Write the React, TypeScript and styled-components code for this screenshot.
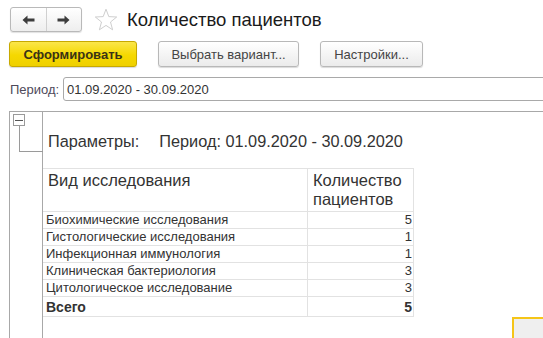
import React from "react";
import styled, { createGlobalStyle } from "styled-components";

const GlobalStyle = createGlobalStyle`
  html, body {
    margin: 0;
    padding: 0;
    background: #ffffff;
    overflow: hidden;
  }
  body {
    font-family: "Liberation Sans", Arial, sans-serif;
    color: #333333;
  }
`;

const Page = styled.div`
  width: 543px;
  height: 338px;
  overflow: hidden;
  display: flex;
  flex-direction: column;
`;

const Header = styled.div`
  display: flex;
  align-items: center;
  padding: 7px 0 0 10px;
  height: 25px;
`;

const NavGroup = styled.div`
  display: flex;
  width: 72px;
  height: 25px;
  box-sizing: border-box;
  border: 1px solid #b9b9b9;
  border-radius: 3px;
  background: linear-gradient(#ffffff, #eeeeee);
  box-shadow: 0 1px 1px rgba(0, 0, 0, 0.12);
`;

const NavButton = styled.div<{ $first?: boolean }>`
  flex: 1;
  display: flex;
  align-items: center;
  justify-content: center;
  border-right: ${(p) => (p.$first ? "1px solid #d0d0d0" : "none")};
`;

const StarWrap = styled.div`
  margin-left: 12px;
  width: 24px;
  height: 24px;
  display: flex;
`;

const Title = styled.div`
  margin-left: 9px;
  font-size: 18.5px;
  color: #1a1a1a;
  line-height: 22px;
`;

const ButtonRow = styled.div`
  display: flex;
  gap: 21px;
  padding: 9px 0 0 9px;
`;

const Button = styled.div<{ $primary?: boolean; $width: number }>`
  box-sizing: border-box;
  width: ${(p) => p.$width}px;
  height: 26px;
  display: flex;
  align-items: center;
  justify-content: center;
  font-size: 13px;
  border-radius: 3px;
  border: 1px solid ${(p) => (p.$primary ? "#c7a900" : "#b8b8b8")};
  background: ${(p) =>
    p.$primary
      ? "linear-gradient(#fbe64a, #f5d800 55%, #efd000)"
      : "linear-gradient(#ffffff, #ebebeb)"};
  color: ${(p) => (p.$primary ? "#3a3316" : "#444444")};
  font-weight: ${(p) => (p.$primary ? "bold" : "normal")};
  box-shadow: 0 1px 1px rgba(0, 0, 0, 0.15);
`;

const PeriodRow = styled.div`
  display: flex;
  align-items: center;
  padding: 10px 0 0 10px;
`;

const PeriodLabel = styled.div`
  font-size: 13px;
  color: #4e4a5a;
  width: 53px;
`;

const PeriodInput = styled.div`
  flex: 1;
  box-sizing: border-box;
  height: 24px;
  margin-right: -4px;
  border: 1px solid #a9a9a9;
  border-radius: 3px;
  font-size: 13px;
  color: #333333;
  display: flex;
  align-items: center;
  padding-left: 3px;
`;

const ReportFrame = styled.div`
  margin: 10px -4px 0 9px;
  flex: 1;
  display: flex;
  border: 1px solid #a8a8a8;
  border-bottom: none;
`;

const Gutter = styled.div`
  width: 32px;
  border-right: 1px solid #a8a8a8;
  position: relative;
`;

const CollapseBox = styled.div`
  position: absolute;
  left: 3px;
  top: 2px;
  width: 12px;
  height: 12px;
  box-sizing: border-box;
  border: 1px solid #9a9a9a;
  background: #ffffff;
  display: flex;
  align-items: center;
  justify-content: center;
  &::after {
    content: "";
    width: 8px;
    height: 1px;
    background: #555555;
  }
`;

const TreeLine = styled.div`
  position: absolute;
  left: 9px;
  top: 14px;
  width: 23px;
  height: 25px;
  border-left: 1px solid #9a9a9a;
  border-bottom: 1px solid #9a9a9a;
`;

const ReportBody = styled.div`
  flex: 1;
  display: flex;
  flex-direction: column;
  align-items: flex-start;
`;

const ParamsLine = styled.div`
  height: 56px;
  box-sizing: border-box;
  padding: 20px 0 0 5px;
  font-size: 16.3px;
  color: #333333;
  display: flex;
  gap: 20px;
  white-space: nowrap;
`;

const Table = styled.table`
  border-collapse: collapse;
  table-layout: fixed;
  font-family: "Liberation Sans", Arial, sans-serif;
  margin-left: -1px;
`;

const HeadCell = styled.th<{ $width: number }>`
  width: ${(p) => p.$width}px;
  height: 43px;
  box-sizing: border-box;
  border: 1px solid #e2e2e2;
  font-size: 16.5px;
  font-weight: normal;
  line-height: 19px;
  text-align: left;
  vertical-align: top;
  padding: 2px 4px 2px 5px;
  color: #333333;
`;

const Cell = styled.td<{ $num?: boolean; $total?: boolean }>`
  height: ${(p) => (p.$total ? 20 : 17)}px;
  box-sizing: border-box;
  border: 1px solid #e2e2e2;
  font-size: ${(p) => (p.$total ? 14 : 13)}px;
  font-weight: ${(p) => (p.$total ? "bold" : "normal")};
  line-height: 14px;
  padding: 0 1px 0 3px;
  text-align: ${(p) => (p.$num ? "right" : "left")};
  color: #333333;
  white-space: nowrap;
`;

const BottomRow = styled.div`
  flex: 1;
  align-self: stretch;
  display: flex;
  justify-content: flex-end;
  align-items: flex-end;
  padding-bottom: 2px;
`;

const FocusBox = styled.div`
  width: 34px;
  height: 23px;
  box-sizing: border-box;
  border: 2px solid #f5c518;
  background: #efefef;
`;

const rows = [
  { name: "Биохимические исследования", count: 5 },
  { name: "Гистологические исследования", count: 1 },
  { name: "Инфекционная иммунология", count: 1 },
  { name: "Клиническая бактериология", count: 3 },
  { name: "Цитологическое исследование", count: 3 },
];

const Arrow = ({ dir }: { dir: "left" | "right" }) => (
  <svg width="13" height="10" viewBox="0 0 13 10">
    <g transform={dir === "right" ? "translate(13,0) scale(-1,1)" : undefined}>
      <path d="M0.5 5 L5.5 0.5 L5.5 3.5 L12.5 3.5 L12.5 6.5 L5.5 6.5 L5.5 9.5 Z" fill="#3d3d3d" />
    </g>
  </svg>
);

const Star = () => (
  <svg width="24" height="24" viewBox="0 0 24 24">
    <path
      d="M12 1.2 L14.8 8.6 L22.7 9 L16.5 14 L18.6 21.8 L12 17.4 L5.4 21.8 L7.5 14 L1.3 9 L9.2 8.6 Z"
      fill="#ffffff"
      stroke="#c8c8c8"
      strokeWidth="0.9"
      strokeLinejoin="round"
    />
  </svg>
);

const App = () => {
  return (
    <Page>
      <GlobalStyle />
      <Header>
        <NavGroup>
          <NavButton $first>
            <Arrow dir="left" />
          </NavButton>
          <NavButton>
            <Arrow dir="right" />
          </NavButton>
        </NavGroup>
        <StarWrap>
          <Star />
        </StarWrap>
        <Title>Количество пациентов</Title>
      </Header>

      <ButtonRow>
        <Button $primary $width={128}>
          Сформировать
        </Button>
        <Button $width={141}>Выбрать вариант...</Button>
        <Button $width={103}>Настройки...</Button>
      </ButtonRow>

      <PeriodRow>
        <PeriodLabel>Период:</PeriodLabel>
        <PeriodInput>01.09.2020 - 30.09.2020</PeriodInput>
      </PeriodRow>

      <ReportFrame>
        <Gutter>
          <TreeLine />
          <CollapseBox />
        </Gutter>
        <ReportBody>
          <ParamsLine>
            <span>Параметры:</span>
            <span>Период: 01.09.2020 - 30.09.2020</span>
          </ParamsLine>
          <Table>
            <thead>
              <tr>
                <HeadCell $width={265}>Вид исследования</HeadCell>
                <HeadCell $width={106}>Количество пациентов</HeadCell>
              </tr>
            </thead>
            <tbody>
              {rows.map((r) => (
                <tr key={r.name}>
                  <Cell>{r.name}</Cell>
                  <Cell $num>{r.count}</Cell>
                </tr>
              ))}
              <tr>
                <Cell $total>Всего</Cell>
                <Cell $total $num>
                  5
                </Cell>
              </tr>
            </tbody>
          </Table>
          <BottomRow>
            <FocusBox />
          </BottomRow>
        </ReportBody>
      </ReportFrame>
    </Page>
  );
};

export default App;
